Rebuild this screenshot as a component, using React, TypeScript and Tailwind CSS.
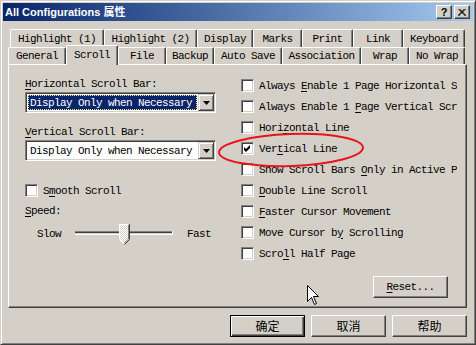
import React from "react";

const mono =
  "font-['Liberation_Mono',monospace] text-[11px] tracking-[-0.6px] leading-[12px] text-black";
const raised =
  "border border-t-white border-l-white border-r-[#404040] border-b-[#404040] shadow-[inset_-1px_-1px_0_#808080]";
const sunken =
  "border border-t-[#808080] border-l-[#808080] border-r-white border-b-white shadow-[inset_1px_1px_0_#404040,inset_-1px_-1px_0_#d4d0c8]";

const row1 = [
  { label: "Highlight (1)", w: "w-[94px]" },
  { label: "Highlight (2)", w: "w-[93px]" },
  { label: "Display", w: "w-[56px]" },
  { label: "Marks", w: "w-[49px]" },
  { label: "Print", w: "w-[51px]" },
  { label: "Link", w: "w-[50px]" },
  { label: "Keyboard", w: "w-[62px]" },
];

const row2 = [
  { label: "General", w: "w-[58px]" },
  { label: "Scroll", w: "w-[52px]", active: true },
  { label: "File", w: "w-[48px]" },
  { label: "Backup", w: "w-[48px]" },
  { label: "Auto Save", w: "w-[68px]" },
  { label: "Association", w: "w-[79px]" },
  { label: "Wrap", w: "w-[48px]" },
  { label: "No Wrap", w: "w-[56px]" },
];

const options = [
  { label: "Always Enable 1 Page Horizontal Scroll Bar", at: 7 },
  { label: "Always Enable 1 Page Vertical Scroll Bar", at: 16 },
  { label: "Horizontal Line", at: 4 },
  { label: "Vertical Line", at: 3, checked: true },
  { label: "Show Scroll Bars Only in Active Pane", at: 17 },
  { label: "Double Line Scroll", at: 0 },
  { label: "Faster Cursor Movement", at: 0 },
  { label: "Move Cursor by Scrolling", at: 13 },
  { label: "Scroll Half Page", at: 4 },
];

function Acc({ text, at }: { text: string; at?: number }) {
  if (at === undefined) return <>{text}</>;
  return (
    <>
      {text.slice(0, at)}
      <span className="underline underline-offset-[2px]">{text[at]}</span>
      {text.slice(at + 1)}
    </>
  );
}

function Tab({ label, w, active }: { label: string; w: string; active?: boolean }) {
  const base =
    "flex items-center justify-center border-t border-l border-r border-t-white border-l-white border-r-[#404040] shadow-[inset_-1px_0_0_#808080] rounded-t-[2px] bg-[#d4d0c8]";
  if (active) {
    return (
      <div className={`${base} ${w} relative z-10 h-[20px] -mb-px pb-[2px]`}>
        <span className={mono}>{label}</span>
      </div>
    );
  }
  return (
    <div className={`${base} ${w} h-full`}>
      <span className={mono}>{label}</span>
    </div>
  );
}

function CheckBox({ checked }: { checked?: boolean }) {
  return (
    <div className={`${sunken} flex h-[13px] w-[13px] shrink-0 items-center justify-center bg-white`}>
      {checked && (
        <svg width="7" height="7" viewBox="0 0 7 7">
          <path d="M0 2 L2 4 L6 0 L6 3 L2 7 L0 5 Z" fill="#000" />
        </svg>
      )}
    </div>
  );
}

function Combo({ selected }: { selected?: boolean }) {
  return (
    <div className={`${sunken} flex h-[21px] w-[191px] items-center bg-white p-[1px]`}>
      <div className="flex h-full flex-1 items-center px-[1px]">
        <div
          className={
            selected
              ? "flex h-[15px] w-full items-center border border-dotted border-[#e8e890] bg-[#0a246a] pl-[1px] text-white"
              : "flex h-[15px] w-full items-center pl-[2px]"
          }
        >
          <span className={`${mono} ${selected ? "text-white" : ""}`}>Display Only when Necessary</span>
        </div>
      </div>
      <div className="flex h-[17px] w-[16px] items-center justify-center border border-t-[#d4d0c8] border-l-[#d4d0c8] border-r-[#404040] border-b-[#404040] bg-[#d4d0c8] shadow-[inset_1px_1px_0_white,inset_-1px_-1px_0_#808080]">
        <svg width="7" height="4" viewBox="0 0 7 4">
          <path d="M0 0 H7 L3.5 4 Z" fill="#000" />
        </svg>
      </div>
    </div>
  );
}

function Slider() {
  return (
    <svg width="98" height="22" viewBox="0 0 98 22">
      <defs>
        <pattern id="dither" width="2" height="2" patternUnits="userSpaceOnUse">
          <rect width="2" height="2" fill="#d4d0c8" />
          <rect width="1" height="1" fill="#fff" />
          <rect x="1" y="1" width="1" height="1" fill="#fff" />
        </pattern>
      </defs>
      <rect x="0" y="8" width="98" height="1" fill="#808080" />
      <rect x="0" y="9" width="98" height="1" fill="#404040" />
      <rect x="0" y="10" width="98" height="1" fill="#d4d0c8" />
      <rect x="0" y="11" width="98" height="1" fill="#fff" />
      <rect x="97" y="8" width="1" height="4" fill="#fff" />
      <g transform="translate(44,1)">
        <path d="M0 0 H10 V15 L5 20 L0 15 Z" fill="url(#dither)" />
        <path d="M0.5 15 V0.5 H9.5" fill="none" stroke="#fff" />
        <path d="M10.5 0 V15.5 L5.5 20.5" fill="none" stroke="#404040" />
        <path d="M9.5 1 V15 L5 19.5" fill="none" stroke="#808080" />
        <path d="M0.5 15.5 L5 20" fill="none" stroke="#fff" />
      </g>
    </svg>
  );
}

function Button({ children, isDefault }: { children: React.ReactNode; isDefault?: boolean }) {
  const cls = isDefault
    ? "border border-black shadow-[inset_1px_1px_0_white,inset_-1px_-1px_0_#404040,inset_-2px_-2px_0_#808080]"
    : raised;
  return (
    <div className={`${cls} flex h-[22px] w-[75px] items-center justify-center bg-[#d4d0c8]`}>
      {children}
    </div>
  );
}

export default function App() {
  const cjk = "font-['Noto_Sans_CJK_SC',sans-serif] text-[12px] leading-[14px] text-black";
  return (
    <div className="relative flex h-[345px] w-[476px] flex-col overflow-hidden border border-t-[#d4d0c8] border-l-[#d4d0c8] border-r-[#404040] border-b-[#404040] bg-[#d4d0c8] p-[2px] shadow-[inset_1px_1px_0_white,inset_-1px_-1px_0_#808080]">
      {/* title bar */}
      <div className="flex h-[18px] shrink-0 items-center justify-between bg-linear-to-r from-[#0a246a] to-[#a6caf0] pl-[2px] pr-[3px]">
        <span className="font-['Liberation_Sans','Noto_Sans_CJK_SC',sans-serif] text-[11px] font-bold leading-[14px] text-white">
          All Configurations 属性
        </span>
        <div className="flex gap-[2px]">
          <div className={`${raised} flex h-[14px] w-[16px] items-center justify-center bg-[#d4d0c8]`}>
            <span className="font-['Liberation_Sans',sans-serif] text-[11px] font-bold leading-[11px] text-black">?</span>
          </div>
          <div className={`${raised} flex h-[14px] w-[16px] items-center justify-center bg-[#d4d0c8]`}>
            <svg width="8" height="7" viewBox="0 0 8 7">
              <path d="M0.5 0 L7.5 7 M7.5 0 L0.5 7 M1.5 0 L8.5 7 M6.5 0 L-0.5 7" stroke="#000" strokeWidth="1" />
            </svg>
          </div>
        </div>
      </div>

      <div className="mt-[8px] flex flex-col pl-[5px]">
        {/* tabs */}
        <div className="flex h-[18px] pl-[2px]">
          {row1.map((t) => (
            <Tab key={t.label} label={t.label} w={t.w} />
          ))}
        </div>
        <div className="flex h-[17px] items-end">
          {row2.map((t) => (
            <Tab key={t.label} label={t.label} w={t.w} active={t.active} />
          ))}
        </div>

        {/* panel */}
        <div className={`${raised} flex h-[244px] w-[459px] flex-col`}>
          <div className="flex pl-[16px]">
            <div className="flex w-[191px] flex-col pt-[13px]">
              <div className={`${mono} h-[12px]`}>
                <Acc text="Horizontal Scroll Bar:" at={0} />
              </div>
              <div className="mt-[2px]">
                <Combo selected />
              </div>
              <div className={`${mono} mt-[13px] h-[12px]`}>
                <Acc text="Vertical Scroll Bar:" at={0} />
              </div>
              <div className="mt-[2px]">
                <Combo />
              </div>
              <div className="mt-[23px] flex h-[13px] items-center gap-[5px]">
                <CheckBox />
                <span className={mono}>
                  <Acc text="Smooth Scroll" at={1} />
                </span>
              </div>
              <div className={`${mono} mt-[8px] h-[12px]`}>
                <Acc text="Speed:" at={0} />
              </div>
              <div className="mt-[6px] flex h-[22px] items-center pl-[12px]">
                <span className={mono}>Slow</span>
                <div className="ml-[14px] flex">
                  <Slider />
                </div>
                <span className={`${mono} ml-[14px]`}>Fast</span>
              </div>
            </div>

            <div className="ml-[25px] flex w-[216px] flex-col pt-[10px]">
              {options.map((o) => (
                <div key={o.label} className="flex h-[21px] items-center gap-[5px]">
                  <CheckBox checked={o.checked} />
                  <span className={`${mono} w-[198px] overflow-hidden whitespace-nowrap`}>
                    <Acc text={o.label} at={o.at} />
                  </span>
                </div>
              ))}
            </div>
          </div>

          <div className="mt-[12px] flex justify-end pr-[18px]">
            <Button>
              <span className={mono}>
                <Acc text="Reset..." at={0} />
              </span>
            </Button>
          </div>
        </div>

        {/* dialog buttons */}
        <div className="mt-[7px] flex w-[459px] justify-end gap-[6px]">
          <Button isDefault>
            <span className={cjk}>确定</span>
          </Button>
          <Button>
            <span className={cjk}>取消</span>
          </Button>
          <Button>
            <span className={cjk}>帮助</span>
          </Button>
        </div>
      </div>

      {/* red annotation ellipse */}
      <svg className="pointer-events-none absolute left-[210px] top-[125px]" width="160" height="50" viewBox="210 125 160 50">
        <ellipse cx="290" cy="149" rx="72" ry="16" fill="none" stroke="#e8141c" strokeWidth="2" transform="rotate(-2 290 149)" />
      </svg>

      {/* mouse cursor */}
      <svg className="pointer-events-none absolute left-[306px] top-[284px]" width="13" height="21" viewBox="0 0 13 21">
        <path d="M0.5 0.5 V16.5 L4.5 12.5 L7.5 19.5 L9.5 18.5 L6.5 11.5 H11.5 Z" fill="#fff" stroke="#000" strokeWidth="1" />
      </svg>
    </div>
  );
}
